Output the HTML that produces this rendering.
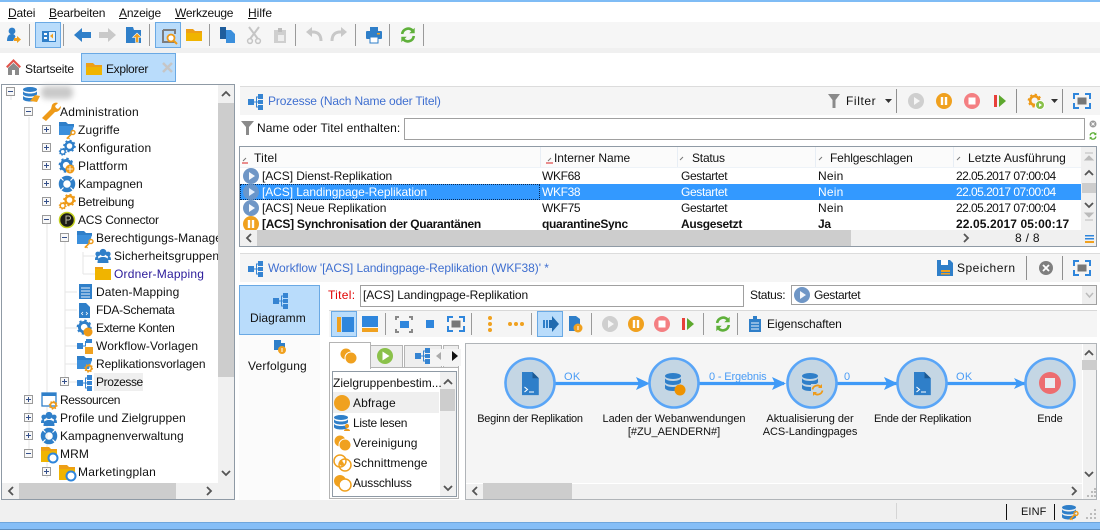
<!DOCTYPE html>
<html lang="de"><head><meta charset="utf-8"><title>Explorer</title>
<style>
*{box-sizing:border-box}
html,body{margin:0;padding:0;width:1100px;height:530px;overflow:hidden;background:#fff}
body{position:relative;font:12px/16px "Liberation Sans",sans-serif;color:#111;letter-spacing:.1px}
.a{position:absolute}
.t{position:absolute;white-space:nowrap}
.box{position:absolute;border:1px solid #a0a0a0;background:#fff}
.bar{position:absolute;background:#f5f5f5}
.btn{position:absolute;background:#b9dcfb;border:1px solid #6aa9e4}
.sb{position:absolute;background:#f0f0f0}
.th{position:absolute;background:#cdcdcd}
svg.ov{position:absolute;left:0;top:0;width:1100px;height:530px;pointer-events:none}
.b{font-weight:bold;letter-spacing:-.3px}
.lb{color:#3f6fd0}
.w{color:#fff}
.wk{letter-spacing:-.35px}
.ge{letter-spacing:-.35px}
.ne{letter-spacing:.2px}
.dt{letter-spacing:-.55px}
.ti{letter-spacing:-.08px}
.d{font-size:11px;letter-spacing:-.05px;line-height:13px;text-align:center;color:#111}
</style></head><body>

<!-- window frame -->
<div class="a" style="left:0;top:0;width:1100px;height:2px;background:#7fbcf5"></div>
<div class="a" style="left:0;top:22px;width:1100px;height:26px;background:#f6f6f6"></div>
<div class="a" style="left:0;top:48px;width:1100px;height:5px;background:#f0f0f0"></div>
<div class="a" style="left:0;top:500px;width:1100px;height:22px;background:#f0f0f0"></div>
<div class="a" style="left:0;top:522px;width:1100px;height:7px;background:#85bef7"></div>
<div class="a" style="left:0;top:529px;width:1100px;height:1px;background:#5e8fc0"></div>
<div class="a" style="left:0;top:522px;width:1100px;height:1px;background:#6fa6dc"></div>

<!-- menu -->
<span class="t" style="left:8px;top:5px;letter-spacing:-.15px"><u>D</u>atei</span>
<span class="t" style="left:49px;top:5px;letter-spacing:-.18px"><u>B</u>earbeiten</span>
<span class="t" style="left:119px;top:5px;letter-spacing:-.2px"><u>A</u>nzeige</span>
<span class="t" style="left:175px;top:5px;letter-spacing:-.25px"><u>W</u>erkzeuge</span>
<span class="t" style="left:248px;top:5px;letter-spacing:0"><u>H</u>ilfe</span>

<div class="btn" style="left:35px;top:22px;width:26px;height:26px"></div>
<div class="btn" style="left:155px;top:22px;width:26px;height:26px"></div>

<!-- tabs -->
<div class="btn" style="left:81px;top:53px;width:95px;height:29px"></div>
<span class="t" style="left:25px;top:61px;letter-spacing:-.18px">Startseite</span>
<span class="t" style="left:106px;top:61px;letter-spacing:-.33px">Explorer</span>

<!-- tree -->
<div class="box" style="left:1px;top:84px;width:234px;height:416px;border-color:#8f9aa5"></div>
<div class="sb" style="left:218px;top:85px;width:16px;height:398px"></div>
<div class="th" style="left:218px;top:103px;width:16px;height:274px"></div>
<div class="sb" style="left:2px;top:483px;width:232px;height:16px"></div>
<div class="th" style="left:19px;top:483px;width:157px;height:16px"></div>
<div class="a" style="left:94px;top:373px;width:49px;height:18px;background:#efefef"></div>
<div class="a" style="left:41px;top:86px;width:32px;height:13px;background:#c9c9c9;filter:blur(3px);border-radius:5px"></div>

<span class="t" style="left:60px;top:104px;letter-spacing:.2px">Administration</span>
<span class="t" style="left:78px;top:122px;letter-spacing:.17px">Zugriffe</span>
<span class="t" style="left:78px;top:140px;letter-spacing:.2px">Konfiguration</span>
<span class="t" style="left:78px;top:158px;letter-spacing:.2px">Plattform</span>
<span class="t" style="left:78px;top:176px;letter-spacing:0">Kampagnen</span>
<span class="t" style="left:78px;top:194px;letter-spacing:-.2px">Betreibung</span>
<span class="t" style="left:78px;top:212px;letter-spacing:-.2px">ACS Connector</span>
<span class="t" style="left:96px;top:230px;width:122px;overflow:hidden;letter-spacing:.1px">Berechtigungs-Management</span>
<span class="t" style="left:114px;top:248px;width:104px;overflow:hidden;letter-spacing:.1px">Sicherheitsgruppen</span>
<span class="t" style="left:114px;top:266px;color:#2a1a9a;letter-spacing:.2px">Ordner-Mapping</span>
<span class="t" style="left:96px;top:284px;letter-spacing:.1px">Daten-Mapping</span>
<span class="t" style="left:96px;top:302px;letter-spacing:-.3px">FDA-Schemata</span>
<span class="t" style="left:96px;top:320px;letter-spacing:-.3px">Externe Konten</span>
<span class="t" style="left:96px;top:338px;letter-spacing:.1px">Workflow-Vorlagen</span>
<span class="t" style="left:96px;top:356px;letter-spacing:-.1px">Replikationsvorlagen</span>
<span class="t" style="left:96px;top:374px;letter-spacing:-.4px">Prozesse</span>
<span class="t" style="left:60px;top:392px;letter-spacing:-.4px">Ressourcen</span>
<span class="t" style="left:60px;top:410px;letter-spacing:.07px">Profile und Zielgruppen</span>
<span class="t" style="left:60px;top:428px;letter-spacing:.05px">Kampagnenverwaltung</span>
<span class="t" style="left:60px;top:446px;letter-spacing:.1px">MRM</span>
<span class="t" style="left:78px;top:464px;letter-spacing:.2px">Marketingplan</span>

<!-- upper panel -->
<div class="a" style="left:240px;top:86px;width:860px;height:1px;background:#dcdcdc"></div>
<div class="bar" style="left:240px;top:87px;width:860px;height:28px"></div>
<span class="t lb" style="left:268px;top:93px;letter-spacing:-.15px">Prozesse (Nach Name oder Titel)</span>
<span class="t" style="left:846px;top:93px;letter-spacing:.6px">Filter</span>
<span class="t" style="left:257px;top:120px;letter-spacing:.1px">Name oder Titel enthalten:</span>
<div class="box" style="left:404px;top:118px;width:681px;height:22px"></div>

<!-- grid -->
<div class="box" style="left:239px;top:146px;width:858px;height:101px;border-color:#8f9aa5"></div>
<div class="a" style="left:240px;top:147px;width:841px;height:21px;background:#fbfbfb;border-bottom:1px solid #eef3f8"></div>
<div class="a" style="left:540px;top:147px;width:1px;height:20px;background:#e8eef5"></div>
<div class="a" style="left:677px;top:147px;width:1px;height:20px;background:#e8eef5"></div>
<div class="a" style="left:815px;top:147px;width:1px;height:20px;background:#e8eef5"></div>
<div class="a" style="left:953px;top:147px;width:1px;height:20px;background:#e8eef5"></div>
<span class="t" style="left:254px;top:150px;letter-spacing:.2px">Titel</span>
<span class="t" style="left:554px;top:150px;letter-spacing:-.04px">Interner Name</span>
<span class="t" style="left:692px;top:150px;letter-spacing:-.2px">Status</span>
<span class="t" style="left:830px;top:150px;letter-spacing:-.15px">Fehlgeschlagen</span>
<span class="t" style="left:968px;top:150px;letter-spacing:.07px">Letzte Ausführung</span>

<div class="a" style="left:240px;top:184px;width:841px;height:16px;background:#3399ff"></div>
<div class="a" style="left:240px;top:184px;width:300px;height:16px;border:1px dotted #0a2a55"></div>

<span class="t ti" style="left:262px;top:168px">[ACS] Dienst-Replikation</span>
<span class="t wk" style="left:542px;top:168px">WKF68</span>
<span class="t ge" style="left:681px;top:168px">Gestartet</span>
<span class="t ne" style="left:818px;top:168px">Nein</span>
<span class="t dt" style="left:956px;top:168px">22.05.2017 07:00:04</span>
<span class="t w ti" style="left:262px;top:184px">[ACS] Landingpage-Replikation</span>
<span class="t w wk" style="left:542px;top:184px">WKF38</span>
<span class="t w ge" style="left:681px;top:184px">Gestartet</span>
<span class="t w ne" style="left:818px;top:184px">Nein</span>
<span class="t w dt" style="left:956px;top:184px">22.05.2017 07:00:04</span>
<span class="t ti" style="left:262px;top:200px">[ACS] Neue Replikation</span>
<span class="t wk" style="left:542px;top:200px">WKF75</span>
<span class="t ge" style="left:681px;top:200px">Gestartet</span>
<span class="t ne" style="left:818px;top:200px">Nein</span>
<span class="t dt" style="left:956px;top:200px">22.05.2017 07:00:04</span>
<span class="t b" style="left:262px;top:216px">[ACS] Synchronisation der Quarantänen</span>
<span class="t b" style="left:542px;top:216px">quarantineSync</span>
<span class="t b" style="left:681px;top:216px">Ausgesetzt</span>
<span class="t b" style="left:818px;top:216px">Ja</span>
<span class="t b" style="left:956px;top:216px;letter-spacing:.1px">22.05.2017 05:00:17</span>

<div class="sb" style="left:240px;top:230px;width:856px;height:16px"></div>
<div class="th" style="left:257px;top:230px;width:594px;height:16px"></div>
<div class="sb" style="left:1081px;top:147px;width:15px;height:83px"></div>
<div class="th" style="left:1082px;top:183px;width:14px;height:10px"></div>
<span class="t" style="left:1015px;top:230px;letter-spacing:.3px">8 / 8</span>

<!-- lower panel -->
<div class="a" style="left:240px;top:253px;width:860px;height:1px;background:#dcdcdc"></div>
<div class="bar" style="left:240px;top:254px;width:860px;height:28px"></div>
<span class="t lb" style="left:268px;top:260px;letter-spacing:-.06px">Workflow '[ACS] Landingpage-Replikation (WKF38)' *</span>
<span class="t" style="left:957px;top:260px;letter-spacing:.5px">Speichern</span>

<div class="a" style="left:239px;top:285px;width:81px;height:215px;background:#fbfbfb"></div>
<div class="btn" style="left:239px;top:285px;width:81px;height:50px"></div>
<span class="t" style="left:250px;top:310px;letter-spacing:.05px">Diagramm</span>
<span class="t" style="left:248px;top:358px;letter-spacing:.15px">Verfolgung</span>

<span class="t" style="left:328px;top:287px;color:#e00000;letter-spacing:.3px">Titel:</span>
<div class="box" style="left:360px;top:285px;width:384px;height:22px"></div>
<span class="t" style="left:363px;top:287px;letter-spacing:-.08px">[ACS] Landingpage-Replikation</span>
<span class="t" style="left:750px;top:287px;letter-spacing:-.3px">Status:</span>
<div class="box" style="left:791px;top:285px;width:306px;height:20px"></div>
<div class="a" style="left:1082px;top:286px;width:14px;height:18px;background:#eee"></div>
<span class="t ge" style="left:814px;top:287px">Gestartet</span>

<div class="a" style="left:329px;top:310px;width:768px;height:1px;background:#d8d8d8"></div>
<div class="bar" style="left:329px;top:311px;width:768px;height:26px"></div>
<div class="btn" style="left:331px;top:311px;width:26px;height:26px"></div>
<div class="btn" style="left:537px;top:311px;width:26px;height:26px"></div>
<span class="t" style="left:767px;top:316px;letter-spacing:-.1px">Eigenschaften</span>

<!-- palette -->
<div class="box" style="left:329px;top:367px;width:130px;height:132px;background:#fff;border-color:#b4b4b4"></div>
<div class="a" style="left:370px;top:345px;width:33px;height:23px;background:#eee;border:1px solid #b4b4b4"></div>
<div class="a" style="left:404px;top:345px;width:38px;height:23px;background:#eee;border:1px solid #b4b4b4"></div>
<div class="a" style="left:443px;top:345px;width:16px;height:23px;background:#eee;border:1px solid #b4b4b4"></div>
<div class="a" style="left:329px;top:342px;width:42px;height:27px;background:#fff;border:1px solid #b4b4b4;border-bottom:0"></div>
<div class="a" style="left:429px;top:349px;width:32px;height:17px;background:#f4f4f4"></div>
<div class="box" style="left:332px;top:371px;width:125px;height:126px;border-color:#8f9aa5"></div>
<div class="sb" style="left:440px;top:372px;width:16px;height:124px"></div>
<div class="th" style="left:440px;top:389px;width:15px;height:22px"></div>
<div class="a" style="left:333px;top:392px;width:106px;height:21px;background:#efefef"></div>
<span class="t" style="left:333px;top:375px;letter-spacing:0">Zielgruppenbestim...</span>
<span class="t" style="left:353px;top:395px;letter-spacing:.1px">Abfrage</span>
<span class="t" style="left:353px;top:415px;letter-spacing:-.3px">Liste lesen</span>
<span class="t" style="left:353px;top:435px;letter-spacing:.1px">Vereinigung</span>
<span class="t" style="left:353px;top:455px;letter-spacing:.1px">Schnittmenge</span>
<span class="t" style="left:353px;top:475px;letter-spacing:-.2px">Ausschluss</span>

<!-- diagram -->
<div class="box" style="left:465px;top:343px;width:632px;height:157px;background:#f5f5f5;border-color:#b0b4b8"></div>
<div class="a" style="left:466px;top:483px;width:630px;height:16px;background:#f0f0f0;border-top:1px solid #fff"></div>
<div class="th" style="left:483px;top:483px;width:89px;height:16px"></div>
<div class="a" style="left:1082px;top:344px;width:14px;height:155px;background:#f0f0f0;border-left:1px solid #fff"></div>
<div class="th" style="left:1082px;top:360px;width:15px;height:10px"></div>

<div class="t d" style="left:460px;top:413px;width:140px;letter-spacing:-.23px">Beginn der Replikation</div>
<div class="t d" style="left:590px;top:413px;width:168px">Laden der Webanwendungen<br>[#ZU_AENDERN#]</div>
<div class="t d" style="left:745px;top:413px;width:130px">Aktualisierung der<br>ACS-Landingpages</div>
<div class="t d" style="left:860px;top:413px;width:125px;letter-spacing:-.25px">Ende der Replikation</div>
<div class="t d" style="left:1020px;top:413px;width:60px">Ende</div>
<span class="t d" style="left:564px;top:371px;color:#4a9cf5;letter-spacing:.3px">OK</span>
<span class="t d" style="left:709px;top:371px;color:#4a9cf5;letter-spacing:-.15px">0 - Ergebnis</span>
<span class="t d" style="left:844px;top:371px;color:#4a9cf5">0</span>
<span class="t d" style="left:956px;top:371px;color:#4a9cf5;letter-spacing:.3px">OK</span>

<span class="t d" style="left:1021px;top:506px;letter-spacing:.1px">EINF</span>
<div class="a" style="left:896px;top:503px;width:1px;height:16px;background:#d5d5d5"></div>
<div class="a" style="left:1006px;top:504px;width:1px;height:16px;background:#111"></div>
<div class="a" style="left:1054px;top:504px;width:1px;height:16px;background:#111"></div>

<svg class="ov" viewBox="0 0 1100 530" xmlns="http://www.w3.org/2000/svg">
<defs>
<g id="plus"><rect x=".5" y=".5" width="8" height="8" fill="#f8f8f8" stroke="#9a9a9a"/><path d="M2 4.500h5M4.500 2v5" stroke="#35508a" fill="none"/></g>
<g id="minus"><rect x=".5" y=".5" width="8" height="8" fill="#f8f8f8" stroke="#9a9a9a"/><path d="M2 4.500h5" stroke="#35508a" fill="none"/></g>
<g id="proc" fill="#3584d2"><rect x="0" y="5" width="6" height="6"/><path d="M6 7.500h3v1H6zM8 2.500h1v11H8zM8 2.500h2v1H8zM8 7.500h2v1H8zM8 12.500h2v1H8z"/><rect x="10" y="0" width="5" height="5"/><rect x="10" y="6" width="5" height="4"/><rect x="10" y="11" width="5" height="5"/></g>
<g id="play"><circle cx="8" cy="8" r="8" fill="#6f96c6"/><path d="M6 4l6 4-6 4z" fill="#f4f7fb"/></g>
<g id="gplay"><circle cx="8" cy="8" r="8" fill="#cfcfcf"/><path d="M6 4l6 4-6 4z" fill="#f6f6f6"/></g>
<g id="pause"><circle cx="8" cy="8" r="8" fill="#f0a11f"/><rect x="4.800" y="4" width="2.400" height="8" fill="#fff"/><rect x="8.800" y="4" width="2.400" height="8" fill="#fff"/></g>
<g id="stop"><circle cx="8" cy="8" r="8" fill="#f47f82"/><rect x="4.500" y="4.500" width="7" height="7" fill="#fff"/></g>
<g id="step"><rect x="0" y="1" width="3" height="12" fill="#e8403a"/><path d="M5 1l7 6-7 6z" fill="#5da82e"/></g>
<g id="refresh" fill="none" stroke="#5fb03a" stroke-width="2.600"><path d="M2.200 7A6 6 0 0 1 12.500 3.500"/><path d="M13.800 9A6 6 0 0 1 3.500 12.500"/><path d="M14.700 0.800v5.400h-5.400z" fill="#5fb03a" stroke="none"/><path d="M1.300 15.200V9.800h5.400z" fill="#5fb03a" stroke="none"/></g>
<g id="fit"><path d="M0 5V0h5M11 0h5v5M16 9v5h-5M5 14H0V9" fill="none" stroke="#2f86dc" stroke-width="2"/><rect x="3.500" y="3.500" width="9" height="7" fill="#777"/></g>
<g id="fold"><path d="M0 1h7l2 2h7v3H0z" fill="#ee9f16"/><path d="M0 5h16v8H0z" fill="#f0b400"/></g>
<g id="blue"><path d="M0 0h7l2 2h6v3H0z" fill="#2f7fc9"/><path d="M0 4h15l-3 9H0z" fill="#3b8fdc"/></g>
<g id="key" fill="none" stroke="#ee9a18"><circle cx="7" cy="2.500" r="2" stroke-width="1.400"/><path d="M5.500 4L.8 8.700" stroke-width="1.600"/><path d="M2 7.500l1.500 1.500" stroke-width="1.200"/></g>
<g id="gear"><circle cx="6" cy="6" r="4" fill="none" stroke="#ee9a18" stroke-width="2.400"/><circle cx="6" cy="6" r="5.500" fill="none" stroke="#ee9a18" stroke-width="1.600" stroke-dasharray="2 2.300"/></g>
<g id="bgear"><circle cx="6" cy="6" r="4" fill="none" stroke="#2f7fc9" stroke-width="2.400"/><circle cx="6" cy="6" r="5.500" fill="none" stroke="#2f7fc9" stroke-width="1.600" stroke-dasharray="2 2.300"/></g>
<g id="life"><circle cx="8" cy="8" r="6" fill="none" stroke="#2f7fc9" stroke-width="4.500"/><path d="M1 1l3.500 3.500M15 1l-3.500 3.500M1 15l3.500-3.500M15 15l-3.500-3.500" stroke="#fff" stroke-width="1.200"/></g>
<g id="people" fill="#2f7fc9"><circle cx="8" cy="4.500" r="3.600"/><path d="M2.500 15c0-5 2-6 5.500-6s5.500 1 5.500 6z"/><circle cx="2.800" cy="6" r="2.400"/><circle cx="13.200" cy="6" r="2.400"/><path d="M0 12c0-3 1-4 2.800-4l1 4zM16 12c0-3-1-4-2.800-4l-1 4z"/></g>
<g id="db"><ellipse cx="7" cy="2.500" rx="7" ry="2.500" fill="#2f7fc9"/><path d="M0 4v3c0 1.400 3 2.500 7 2.500s7-1.100 7-2.500V4c0 1.400-3 2.500-7 2.500S0 5.400 0 4z" fill="#2f7fc9"/><path d="M0 8.500v3.500c0 1.400 3 2.500 7 2.500s7-1.100 7-2.500V8.500c0 1.400-3 2.500-7 2.500S0 9.900 0 8.500z" fill="#2f7fc9"/></g>
<g id="script"><path d="M0 0h10l6 6v16H0z" fill="#2f7fc9" transform="scale(1.050)"/><path d="M10.500 0l6.300 6.300h-6.300z" fill="#1d5a94"/><path d="M2.500 15l3 2.500-3 2.500M7 20h5" fill="none" stroke="#fff" stroke-width="1.100"/></g>
<g id="node"><circle cx="0" cy="0" r="24.500" fill="#c4d6e4" stroke="#59a5f7" stroke-width="2.600"/></g>
</defs>

<!-- toolbar -->
<circle cx="12" cy="31" r="3.400" fill="#2f7fc9"/><path d="M7 41c0-5 2-7 5-7 2 0 3 1 3.500 2.500L13 41z" fill="#2f7fc9"/><path d="M14 38h3v-2l4 3.500-4 3.500v-2h-3z" fill="#f0a11f"/>
<rect x="42" y="31" width="14" height="11" fill="#2f7fc9"/><rect x="49" y="32" width="6" height="9" fill="#dff0ff"/><path d="M53 33.500v5l-3-2.500z" fill="#f0a11f"/><rect x="44" y="33" width="3" height="2" fill="#fff"/><rect x="44" y="37" width="3" height="2" fill="#fff"/>
<path d="M74 35l8-7v4h9v6h-9v4z" fill="#2f7fc9"/>
<path d="M116 35l-8-7v4h-9v6h9v4z" fill="#c9c9c9"/>
<path d="M126 27h7l1 3h7v13h-15z" fill="#2f7fc9"/><path d="M137 33l4.500 4.500h-3v5h-3v-5h-3z" fill="#f0a11f" stroke="#fff" stroke-width=".6"/>
<path d="M163 30h12v4M175 42h-12V30" fill="none" stroke="#7d7d7d" stroke-width="2"/><circle cx="171" cy="38" r="3.500" fill="#fff" stroke="#ee9a18" stroke-width="1.800"/><path d="M174 41l3 3" stroke="#ee9a18" stroke-width="2"/>
<use href="#fold" x="186" y="28"/>
<path d="M220 27h6v12h-6z" fill="#1f5d9c"/><path d="M226 30h5l4 4v9h-9z" fill="#3b8fdc"/>
<path d="M249 27l9 12M259 27l-9 12" stroke="#c5c5c5" stroke-width="2"/><circle cx="250" cy="41" r="2.400" fill="none" stroke="#c5c5c5" stroke-width="1.500"/><circle cx="258" cy="41" r="2.400" fill="none" stroke="#c5c5c5" stroke-width="1.500"/>
<path d="M274 30h12v13h-12z" fill="#cfcfcf"/><rect x="278" y="28" width="4" height="4" fill="#bdbdbd"/><rect x="278" y="35" width="6" height="6" fill="#eee"/>
<path d="M321 41c0-7-4-9-8-9h-2" fill="none" stroke="#c8c8c8" stroke-width="3"/><path d="M306 32l6-5v10z" fill="#c8c8c8"/>
<path d="M332 41c0-7 4-9 8-9h2" fill="none" stroke="#c8c8c8" stroke-width="3"/><path d="M347 32l-6-5v10z" fill="#c8c8c8"/>
<rect x="370" y="27" width="8" height="5" fill="#2f7fc9"/><rect x="366" y="31" width="16" height="8" rx="1" fill="#2f7fc9"/><rect x="370" y="37" width="8" height="6" fill="#fff" stroke="#2f7fc9"/><rect x="377" y="33" width="3" height="1.500" fill="#f0a11f"/>
<use href="#refresh" x="400" y="27"/>
<g fill="#9a9a9a"><rect x="29" y="24" width="1" height="22"/><rect x="63" y="24" width="1" height="22"/><rect x="149" y="24" width="1" height="22"/><rect x="209" y="24" width="1" height="22"/><rect x="295" y="24" width="1" height="22"/><rect x="355" y="24" width="1" height="22"/><rect x="389" y="24" width="1" height="22"/><rect x="423" y="24" width="1" height="22"/></g>

<!-- tabs -->
<path d="M13.500 59l-7.500 7.500 1.500 1.500 6-6 6 6 1.500-1.500z" fill="#e2544b"/><path d="M8 68l5.500-5 5.500 5v7h-4v-5h-3v5H8z" fill="#8a8a8a"/>
<use href="#fold" x="86" y="62"/>
<path d="M163 63l9 9M172 63l-9 9" stroke="#c6c6c6" stroke-width="2.500"/>

<!-- tree lines -->
<g stroke="#e5e5e5" fill="none"><path d="M11 96V100M29 117v340M47 216v262M65 234v145M83 252v22M83 256h12M83 274h12M65 292h12M65 310h12M65 328h12M65 346h12M65 364h12M65 382h12"/></g>

<use href="#minus" x="6" y="87"/><use href="#minus" x="24" y="107"/>
<use href="#plus" x="42" y="125"/><use href="#plus" x="42" y="143"/><use href="#plus" x="42" y="161"/><use href="#plus" x="42" y="179"/><use href="#plus" x="42" y="197"/>
<use href="#minus" x="42" y="215"/><use href="#minus" x="60" y="233"/><use href="#plus" x="60" y="377"/>
<use href="#plus" x="24" y="395"/><use href="#plus" x="24" y="413"/><use href="#plus" x="24" y="431"/><use href="#minus" x="24" y="449"/><use href="#plus" x="42" y="467"/>

<!-- tree icons -->
<use href="#db" x="23" y="87"/><path d="M30 101l5-6 5 1-3 6z" fill="#f0a11f"/>
<path d="M42 118l9-9 1-4c1-2 4-3 6-2l-3 3 1 2 2 1 3-3c0 3-2 6-6 6l-9 9z" fill="#ee9a18"/>
<use href="#blue" x="59" y="122"/><use href="#key" x="66" y="130"/>
<use href="#bgear" transform="translate(63.500 140)"/><use href="#bgear" transform="translate(59 148) scale(.62)"/>
<use href="#bgear" transform="translate(59 158) scale(1.200)"/><circle cx="70" cy="169" r="4.500" fill="#ee9a18"/><path d="M67 169h6M70 166v6" stroke="#fff" stroke-width=".8"/>
<use href="#life" x="59" y="176"/>
<use href="#gear" transform="translate(63.500 194)"/><use href="#gear" transform="translate(59 202) scale(.62)"/>
<circle cx="67" cy="220" r="7.500" fill="#1d1d16" stroke="#c3d01f" stroke-width="1.500"/><path d="M66 224v-8h2.500a2 2 0 0 1 0 4H66" fill="none" stroke="#b9b9a0"/>
<use href="#blue" x="77" y="231"/><use href="#key" x="84" y="239"/>
<use href="#people" x="95" y="248"/>
<rect x="95" y="269" width="16" height="11" fill="#f0b400"/><rect x="95" y="267" width="8" height="2" fill="#ee9f16"/>
<rect x="79" y="284" width="13" height="15" fill="#2f7fc9"/><path d="M81 288h9M81 291h9M81 294h9M81 297h9" stroke="#e8f2fb"/>
<path d="M79 303h7l4 4v11H79z" fill="#2f7fc9"/><path d="M83 312l-1.500 1.500 1.500 1.500M86 312l1.500 1.500-1.500 1.500" stroke="#fff" fill="none" stroke-width=".8"/>
<use href="#bgear" transform="translate(77 320) scale(1.200)"/><circle cx="88" cy="332" r="4.500" fill="#ee9a18"/>
<g transform="translate(77 338)"><rect y="5" width="6" height="6" fill="#3584d2"/><path d="M6 7.500h3v1H6zM8 3h1v5H8z" fill="#3584d2"/><rect x="9" y="1" width="6" height="4" fill="#3584d2"/></g><rect x="85" y="347" width="8" height="7" fill="#f0a11f"/>
<use href="#blue" x="77" y="356"/><use href="#gear" transform="translate(84.500 364) scale(.7)"/>
<use href="#proc" x="77" y="375"/>
<rect x="42" y="393" width="14" height="13" fill="#fff" stroke="#2f7fc9" stroke-width="1.300"/><rect x="42" y="393" width="14" height="3" fill="#2f7fc9"/><use href="#gear" transform="translate(49 401) scale(.7)"/>
<use href="#people" x="41" y="411"/>
<use href="#life" x="41" y="428"/>
<path d="M41 447h8l2 2h6v3H41z" fill="#ee9f16"/><path d="M41 451h16v11H41z" fill="#f0b400"/><circle cx="53" cy="458" r="4.500" fill="#fff" stroke="#2f86dc" stroke-width="2"/>
<path d="M59 465h8l2 2h6v3H59z" fill="#ee9f16"/><path d="M59 469h16v11H59z" fill="#f0b400"/><circle cx="71" cy="476" r="4.500" fill="#fff" stroke="#2f86dc" stroke-width="2"/>

<!-- tree scrollbar arrows -->
<g fill="none" stroke="#555" stroke-width="1.800"><path d="M222 96l4-4 4 4M222 471l4 4 4-4M13 487l-4 4 4 4M207 487l4 4-4 4"/></g>

<!-- upper panel icons -->
<use href="#proc" x="248" y="94"/>
<path d="M828 94h12l-4.500 6v8h-3v-8z" fill="#8a8a8a"/>
<path d="M885 99h7l-3.500 4z" fill="#333"/><rect x="896" y="89" width="1" height="24" fill="#8f8f8f"/>
<use href="#gplay" x="908" y="93"/><use href="#pause" x="936" y="93"/><use href="#stop" x="964" y="93"/><use href="#step" x="994" y="94"/>
<rect x="1016" y="89" width="1" height="24" fill="#8f8f8f"/>
<use href="#gear" transform="translate(1028 94) scale(1.100)"/><circle cx="1040" cy="105" r="4.500" fill="#8ac14a" stroke="#fff"/><path d="M1039 103l3 2-3 2z" fill="#fff"/>
<path d="M1051 99h7l-3.500 4z" fill="#333"/><rect x="1062" y="89" width="1" height="24" fill="#8f8f8f"/>
<use href="#fit" x="1074" y="94"/>
<path d="M241 121h13l-5 6v8h-3v-8z" fill="#8a8a8a"/>
<circle cx="1093" cy="124" r="3.500" fill="#9a9a9a"/><path d="M1091.500 122.500l3 3M1094.500 122.500l-3 3" stroke="#fff"/>
<use href="#refresh" transform="translate(1089 132) scale(.5)"/>

<!-- grid header marks -->
<g stroke="#d92020"><path d="M242 163h6M546 163h7"/></g>
<g stroke="#777"><path d="M243 161l3-3M548 161l3-3M680 160l3-3M819 160l3-3M957 160l3-3"/></g>

<use href="#play" x="243" y="168"/>
<g opacity=".9"><use href="#play" x="243" y="184"/></g>
<use href="#play" x="243" y="200"/>
<use href="#pause" x="243" y="216"/>
<rect x="240" y="230" width="300" height="16" fill="#f0f0f0"/>
<rect x="257" y="230" width="283" height="16" fill="#cdcdcd"/>
<g fill="none" stroke="#555" stroke-width="1.800"><path d="M251 234l-4 4 4 4M964 234l4 4-4 4"/></g>

<g fill="none" stroke="#555" stroke-width="1.800"><path d="M1085 175l4-4 4 4M1085 203l4 4 4-4"/></g>
<path d="M1085 153h8M1085 160l4-4 4 4z" fill="#bbb" stroke="#bbb"/><path d="M1085 220h8M1085 213l4 4 4-4z" fill="#bbb" stroke="#bbb"/>
<rect x="1085" y="235" width="9" height="1.500" fill="#2f86dc"/><rect x="1085" y="238" width="9" height="1.500" fill="#2f86dc"/><rect x="1085" y="241" width="9" height="2" fill="#f0a11f"/>

<!-- lower panel icons -->
<use href="#proc" x="248" y="261"/>
<path d="M937 260h13l3 3v13h-16z" fill="#2f7fc9"/><rect x="941" y="260" width="7" height="5" fill="#fff"/><rect x="941" y="270" width="9" height="2" fill="#f0a11f"/><rect x="941" y="273" width="9" height="1.500" fill="#f0a11f"/>
<rect x="1026" y="256" width="1" height="24" fill="#8f8f8f"/>
<circle cx="1046" cy="268" r="7" fill="#7f7f7f"/><path d="M1043 265l6 6M1049 265l-6 6" stroke="#fff" stroke-width="1.800"/>
<rect x="1062" y="256" width="1" height="24" fill="#8f8f8f"/>
<use href="#fit" x="1074" y="261"/>
<use href="#proc" x="273" y="293"/>
<path d="M274 340h7v3h4v7h-11z" fill="#2f7fc9"/><circle cx="282" cy="350" r="4" fill="#f0a11f"/><rect x="281.500" y="348" width="1" height="4" fill="#fff"/>

<use href="#play" x="794" y="287"/>
<path d="M1086 293l3.500 4 3.500-4" stroke="#bbb" stroke-width="1.500" fill="none"/>

<!-- toolbar 2 -->
<rect x="337" y="317" width="4" height="15" fill="#f0a11f"/><rect x="342" y="317" width="12" height="15" fill="#2f86dc"/>
<rect x="362" y="316" width="16" height="11" fill="#2f86dc"/><rect x="362" y="328" width="16" height="4" fill="#f0a11f"/>
<rect x="385" y="313" width="1" height="22" fill="#9a9a9a"/>
<rect x="400" y="321" width="9" height="7" fill="#2f86dc"/><path d="M396 320v-3h3M409 317h3v3M412 329v3h-3M399 332h-3v-3" fill="none" stroke="#888" stroke-width="2"/>
<rect x="426" y="320" width="8" height="8" fill="#2f86dc"/>
<use href="#fit" x="448" y="317"/>
<rect x="471" y="313" width="1" height="22" fill="#9a9a9a"/>
<g fill="#f0a11f"><circle cx="490" cy="318" r="2"/><circle cx="490" cy="324" r="2"/><circle cx="490" cy="330" r="2"/><circle cx="510" cy="324" r="2"/><circle cx="516" cy="324" r="2"/><circle cx="522" cy="324" r="2"/></g>
<rect x="531" y="313" width="1" height="22" fill="#9a9a9a"/>
<rect x="543" y="320" width="2" height="8" fill="#2f7fc9"/><rect x="546" y="320" width="2" height="8" fill="#2f7fc9"/><path d="M549 320h3v-4l7 8-7 8v-4h-3z" fill="#1f6ab0"/>
<path d="M569 316h7l4 3v12h-11z" fill="#2f7fc9"/><circle cx="578" cy="328" r="4.500" fill="#f0a11f"/><rect x="577.500" y="326" width="1" height="4" fill="#fff"/>
<rect x="591" y="313" width="1" height="22" fill="#9a9a9a"/>
<use href="#gplay" x="602" y="316"/><use href="#pause" x="628" y="316"/><use href="#stop" x="654" y="316"/><use href="#step" x="682" y="317"/>
<rect x="703" y="313" width="1" height="22" fill="#9a9a9a"/>
<use href="#refresh" x="715" y="316"/>
<rect x="737" y="313" width="1" height="22" fill="#9a9a9a"/>
<path d="M749 319h12v13h-12z" fill="#2f7fc9"/><rect x="753" y="316" width="4" height="4" fill="#2f7fc9"/><path d="M751 323h8M751 326h8M751 329h8" stroke="#e8f2fb"/>

<!-- palette icons -->
<circle cx="346" cy="354" r="5.500" fill="#f0a11f"/><circle cx="351" cy="358" r="6" fill="#f0a11f" stroke="#fff"/>
<circle cx="385" cy="356" r="8" fill="#8ac14a"/><path d="M382.500 351.500l7 4.500-7 4.500z" fill="#fff"/>
<use href="#proc" x="415" y="348"/>
<path d="M441 352v8l-5-4z" fill="#aaa"/><path d="M452 351v10l6-5z" fill="#111"/>
<g fill="none" stroke="#555" stroke-width="1.800"><path d="M444 384l4-4 4 4M444 486l4 4 4-4"/></g>
<circle cx="342" cy="403" r="8" fill="#f0a11f"/>
<use href="#db" x="334" y="415"/><circle cx="347" cy="426" r="2" fill="#ee9a18"/><path d="M344 431c0-3 6-3 6 0z" fill="#ee9a18"/>
<circle cx="340" cy="441" r="5.500" fill="#f0a11f"/><circle cx="345" cy="445" r="6" fill="#f0a11f" stroke="#fff"/>
<circle cx="340" cy="461" r="6" fill="none" stroke="#f0a11f" stroke-width="1.500"/><circle cx="345" cy="465" r="6" fill="none" stroke="#f0a11f" stroke-width="1.500"/><path d="M340 460a5 5 0 0 1 4 5l-3 1a5 5 0 0 1-1-6z" fill="#f0a11f"/>
<circle cx="340" cy="481" r="6" fill="#f0a11f"/><circle cx="345" cy="485" r="6" fill="#fff" stroke="#f0a11f" stroke-width="1.500"/>

<!-- diagram -->
<g stroke="#3f9af7" stroke-width="3.200"><path d="M555 383.500h85M699 383.500h85M837 383.500h65M947 383.500h80"/></g>
<g fill="#3f9af7"><path d="M636 377l14 6.500-14 6.500 3-6.500zM772 377l14 6.500-14 6.500 3-6.500zM884 377l14 6.500-14 6.500 3-6.500zM1014 378l12 5.500-12 5.500 3-5.500z"/></g>
<use href="#node" x="530" y="383"/><use href="#node" x="674" y="383"/><use href="#node" x="812" y="383"/><use href="#node" x="922" y="383"/><use href="#node" x="1050" y="383"/>
<use href="#script" x="522" y="372"/>
<use href="#script" x="914" y="372"/>
<g transform="translate(665 373)"><ellipse cx="8" cy="3" rx="8" ry="3" fill="#2f7fc9"/><path d="M0 5v4c0 1.600 3.500 3 8 3s8-1.400 8-3V5c0 1.600-3.500 3-8 3S0 6.600 0 5zM0 11v4c0 1.600 3.500 3 8 3s8-1.400 8-3v-4c0 1.600-3.500 3-8 3s-8-1.400-8-3z" fill="#2f7fc9"/></g>
<circle cx="680" cy="390" r="5.500" fill="#ee9200"/>
<g transform="translate(802 373)"><ellipse cx="8" cy="3" rx="8" ry="3" fill="#2f7fc9"/><path d="M0 5v4c0 1.600 3.500 3 8 3s8-1.400 8-3V5c0 1.600-3.500 3-8 3S0 6.600 0 5zM0 11v4c0 1.600 3.500 3 8 3s8-1.400 8-3v-4c0 1.600-3.500 3-8 3s-8-1.400-8-3z" fill="#2f7fc9"/></g>
<g transform="translate(811 384)"><rect width="13" height="12" fill="#c4d6e4"/><g fill="none" stroke="#ee9a18" stroke-width="1.800"><path d="M1.500 5.500A5 5 0 0 1 10 3M11.500 6.500A5 5 0 0 1 3 9"/></g><path d="M11 0v4H7zM2 12V8h4z" fill="#ee9a18"/></g>
<circle cx="1050" cy="383" r="11" fill="#ed6d70"/><rect x="1045" y="378" width="10" height="10" fill="#e8ecf0"/>
<g fill="none" stroke="#555" stroke-width="1.800"><path d="M477 487l-4 4 4 4M1072 487l4 4-4 4M1085 355l4-4 4 4M1085 472l4 4 4-4"/></g>

<!-- grips -->
<g fill="#bbb"><rect x="1091" y="495" width="2" height="2"/><rect x="1087" y="495" width="2" height="2"/><rect x="1091" y="491" width="2" height="2"/><rect x="1094" y="495" width="2" height="2"/><rect x="1094" y="491" width="2" height="2"/><rect x="1094" y="488" width="2" height="2"/>
<rect x="1094" y="517" width="2" height="2"/><rect x="1090" y="517" width="2" height="2"/><rect x="1086" y="517" width="2" height="2"/><rect x="1094" y="513" width="2" height="2"/><rect x="1090" y="513" width="2" height="2"/><rect x="1094" y="509" width="2" height="2"/></g>
<use href="#db" x="1062" y="505"/><use href="#key" x="1069" y="511"/>
</svg>
</body></html>
